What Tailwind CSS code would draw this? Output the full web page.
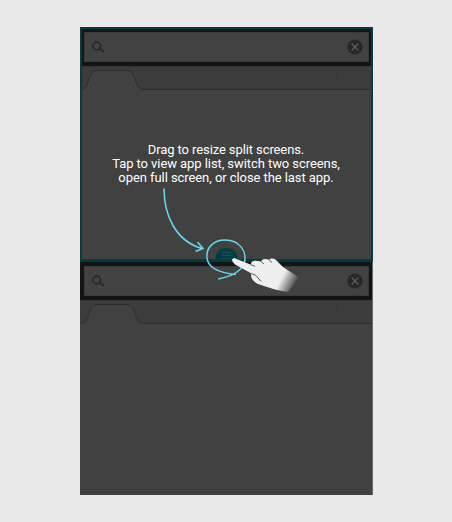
<!DOCTYPE html>
<html lang="en">
<head>
<meta charset="utf-8">
<title>Split screen guide</title>
<script src="https://cdn.jsdelivr.net/npm/@tailwindcss/browser@4"></script>
</head>
<body class="bg-[#e9e9e9] w-[452px] h-[522px] overflow-hidden pt-[27px] pl-[80px]">
<main class="relative w-[293px] h-[468px] bg-[#414141] flex flex-col">
  <section class="h-[235px] border-2 border-b-[3px] border-[#003e44] flex flex-col">
    <div class="h-[37px] shrink-0 bg-[#121415] pt-[3px] px-[2px] pb-[4px]">
      <div class="h-[30px] bg-[#424242] border border-[#393939] flex items-center justify-between pl-[6px] pr-[5px]">
        <svg class="w-[14px] h-[13px]" viewBox="0 0 14 13" fill="none" stroke="#262829"><circle cx="5.6" cy="5" r="3.9" stroke-width="1.6"/><path d="M8.5 7.5L13 11" stroke-width="2.1"/></svg>
        <svg class="w-[16px] h-[16px]" viewBox="0 0 16 16"><circle cx="8" cy="8" r="7.6" fill="#252728"/><path d="M4.6 4.6l6.8 6.8M11.4 4.6l-6.8 6.8" stroke="#58595a" stroke-width="1.4"/></svg>
      </div>
    </div>
    <svg class="w-[289px] h-[28px] shrink-0" viewBox="0 0 289 28" fill="none"><path d="M0 0H289V23H60C54 23 54 4 46 4H14C6 4 6 23 0 23Z" fill="#3c3c3c"/><path d="M0 .5H289" stroke="#353535"/><path d="M254.500 1V15" stroke="#383838"/><path d="M0 23.500C7 23.500 6 4.500 14 4.500H46C54 4.500 53 23.500 60 23.500H289" stroke="#2c2c2c"/></svg>
  </section>
  <section class="flex-1 flex flex-col border-r border-[#686868]">
    <div class="h-[38px] shrink-0 bg-[#121415] pt-[4px] pl-[4px] pr-[3px] pb-[4px]">
      <div class="h-[30px] bg-[#424242] border border-[#393939] flex items-center justify-between pl-[6px] pr-[5px]">
        <svg class="w-[14px] h-[13px]" viewBox="0 0 14 13" fill="none" stroke="#262829"><circle cx="5.6" cy="5" r="3.9" stroke-width="1.6"/><path d="M8.5 7.5L13 11" stroke-width="2.1"/></svg>
        <svg class="w-[16px] h-[16px]" viewBox="0 0 16 16"><circle cx="8" cy="8" r="7.6" fill="#252728"/><path d="M4.600 4.600l6.800 6.800M11.400 4.600l-6.800 6.800" stroke="#58595a" stroke-width="1.4"/></svg>
      </div>
    </div>
    <svg class="w-[292px] h-[28px] shrink-0" viewBox="0 0 292 28" fill="none"><path d="M0 0H292V23H62C56 23 56 4 48 4H16C8 4 8 23 2 23H0Z" fill="#3c3c3c"/><path d="M0 .5H292" stroke="#353535"/><path d="M256.500 1V13" stroke="#383838"/><path d="M0 23.500H2C9 23.500 8 4.500 16 4.500H48C56 4.500 55 23.500 62 23.500H292" stroke="#2c2c2c"/></svg>
  </section>
  <div class="absolute left-0 top-[116px] w-[292px] flex flex-col items-center text-white text-[13px] leading-[14px] whitespace-nowrap font-['Roboto','Liberation_Sans',sans-serif]">
    <p class="tracking-[-0.1px]">Drag to resize split screens.</p>
    <p class="tracking-[-0.07px]">Tap to view app list, switch two screens,</p>
    <p class="tracking-[-0.07px]">open full screen, or close the last app.</p>
  </div>
  <svg class="absolute left-0 top-0 w-[293px] h-[468px]" viewBox="80 27 293 468" fill="none">
    <defs><linearGradient id="hand" gradientUnits="userSpaceOnUse" x1="282" y1="277" x2="296" y2="284"><stop stop-color="#eeeeee"/><stop offset="1" stop-color="#eeeeee" stop-opacity="0"/></linearGradient></defs>
    <path d="M215.500 259C215.500 252 220 248 226.500 248S237.500 252 237.500 259V262H215.500Z" fill="#003e44"/>
    <path d="M222 252.500H231M222 255.500H231M222 258.500H231" stroke="#265459" stroke-width=".8"/>
    <path d="M164 188.500C164 214 175 241 202 248.500M197.500 242L203 248.500L195.500 251.500" stroke="#64d6e8" stroke-width="1.6"/>
    <path d="M218 279C229 277 240 272 244 264C248 251 239 240 225 240C213 240 206.500 248 206.800 257C207.500 268 219 273 236 274.500" stroke="#64d6e8" stroke-width="1.5"/>
    <path d="M232.500 261.500C231 258.500 234 257.800 236 258.800L251 264.800C251 261 254 260.500 256 260.800L261 261.500C262 258.500 266 258.300 269 259.800C271 257.800 274 258.300 276 260L283 267L299 277.500L288 292C279 291 268 287.500 258 284C253 281.500 250 277 251.500 273.500L235 264.500Z" fill="url(#hand)"/>
    <path d="M251 264.800L255 266.300M261 261.500L264 264M269 259.800L272 262.500M251.500 273.500L256 275.500L261 281.500" stroke="#383838" stroke-width=".8"/>
  </svg>
</main>
</body>
</html>
